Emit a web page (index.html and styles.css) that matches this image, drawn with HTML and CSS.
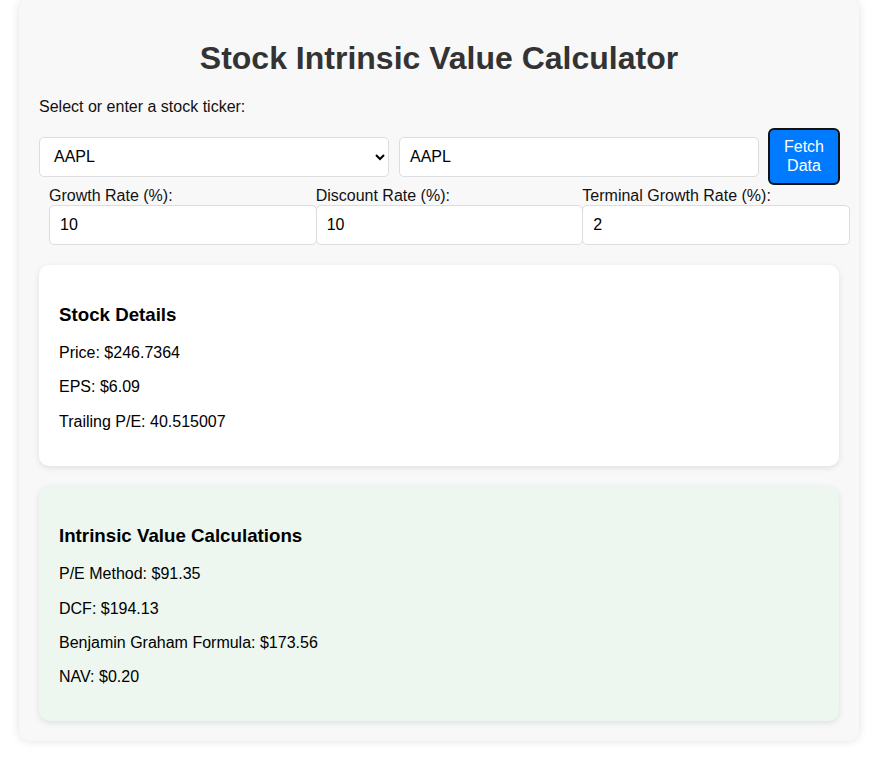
FILE: index.html
```html
<!DOCTYPE html>
<html lang="en">
<head>
<meta charset="UTF-8">
<title>Stock Intrinsic Value Calculator</title>
<link rel="stylesheet" href="styles.css">
</head>
<body>
<div class="container">
  <h1 class="title">Stock Intrinsic Value Calculator</h1>
  <label class="ticker-label" for="ticker-select">Select or enter a stock ticker:</label>
  <div class="ticker-row">
    <select id="ticker-select" class="ticker-select">
      <option>AAPL</option>
      <option>MSFT</option>
      <option>GOOGL</option>
    </select>
    <input class="ticker-input" type="text" value="AAPL">
    <button class="fetch-btn" type="button">Fetch Data</button>
  </div>
  <div class="rates-row">
    <div class="rate-group">
      <label class="rate-label">Growth Rate (%):</label>
      <input class="rate-input" type="number" value="10">
    </div>
    <div class="rate-group">
      <label class="rate-label">Discount Rate (%):</label>
      <input class="rate-input" type="number" value="10">
    </div>
    <div class="rate-group">
      <label class="rate-label">Terminal Growth Rate (%):</label>
      <input class="rate-input" type="number" value="2">
    </div>
  </div>
  <div class="card details">
    <h3 class="card-title">Stock Details</h3>
    <p class="card-line">Price: $246.7364</p>
    <p class="card-line">EPS: $6.09</p>
    <p class="card-line">Trailing P/E: 40.515007</p>
  </div>
  <div class="card results">
    <h3 class="card-title">Intrinsic Value Calculations</h3>
    <p class="card-line">P/E Method: $91.35</p>
    <p class="card-line">DCF: $194.13</p>
    <p class="card-line">Benjamin Graham Formula: $173.56</p>
    <p class="card-line">NAV: $0.20</p>
  </div>
</div>
</body>
</html>
```
FILE: styles.css
```css
* {
  box-sizing: border-box;
}

html, body {
  margin: 0;
  padding: 0;
  background: #ffffff;
}

body {
  font-family: "Liberation Sans", Arial, sans-serif;
  font-size: 16px;
  color: #000;
  padding-left: 19px;
  padding-bottom: 20px;
}

.container {
  width: 840px;
  margin-top: -1px;
  padding: 20px;
  background: #f8f8f8;
  border-radius: 10px;
  box-shadow: 0 0 10px rgba(0, 0, 0, 0.12);
}

.title {
  margin: 21.44px 0 20.44px;
  font-size: 32px;
  font-weight: bold;
  color: #333;
  text-align: center;
  line-height: 37px;
}

.ticker-label {
  display: block;
  line-height: 18.4px;
  color: #111;
}

.ticker-row {
  display: flex;
  align-items: center;
  margin-top: 12px;
}

.ticker-select {
  flex: 0 0 350px;
  width: 350px;
  height: 40px;
  margin-right: 10px;
  padding: 0 10px;
  font-family: "Liberation Sans", Arial, sans-serif;
  font-size: 16px;
  color: #000;
  background: #fff;
  border: 1px solid #ddd;
  border-radius: 5px;
}

.ticker-input {
  flex: 0 0 360px;
  width: 360px;
  height: 40px;
  margin-right: 9px;
  padding: 0 10px;
  font-family: "Liberation Sans", Arial, sans-serif;
  font-size: 16px;
  color: #000;
  background: #fff;
  border: 1px solid #ddd;
  border-radius: 5px;
}

.fetch-btn {
  flex: 0 0 72px;
  width: 72px;
  padding: 8px 6px;
  font-family: "Liberation Sans", Arial, sans-serif;
  font-size: 16px;
  line-height: 18.4px;
  color: #fff;
  background: #007bff;
  border: 2px solid #111;
  border-radius: 6px;
  text-align: center;
}

.rates-row {
  display: flex;
  width: 800px;
  margin-top: 1px;
  margin-left: 10px;
}

.rate-group {
  flex: 1 1 0;
  min-width: 0;
  overflow: visible;
}

.rate-label {
  display: block;
  line-height: 19px;
  color: #111;
}

.rate-input {
  display: block;
  width: calc(100% + 1px);
  height: 40px;
  padding: 0 10px;
  font-family: "Liberation Sans", Arial, sans-serif;
  font-size: 16px;
  color: #000;
  background: #fff;
  border: 1px solid #ddd;
  border-radius: 5px;
  -moz-appearance: textfield;
}

.rate-input::-webkit-outer-spin-button,
.rate-input::-webkit-inner-spin-button {
  -webkit-appearance: none;
  margin: 0;
}

.card {
  margin-top: 20px;
  padding: 20px;
  border-radius: 10px;
  box-shadow: 0 2px 6px rgba(0, 0, 0, 0.1);
}

.details {
  background: #ffffff;
  padding-bottom: 19px;
}

.results {
  background: #edf7ef;
  padding-bottom: 18px;
}

.card-title {
  margin: 18.72px 0;
  font-size: 18.72px;
  font-weight: bold;
  line-height: 21.5px;
}

.card-line {
  margin: 16px 0;
  line-height: 18.4px;
}
```
